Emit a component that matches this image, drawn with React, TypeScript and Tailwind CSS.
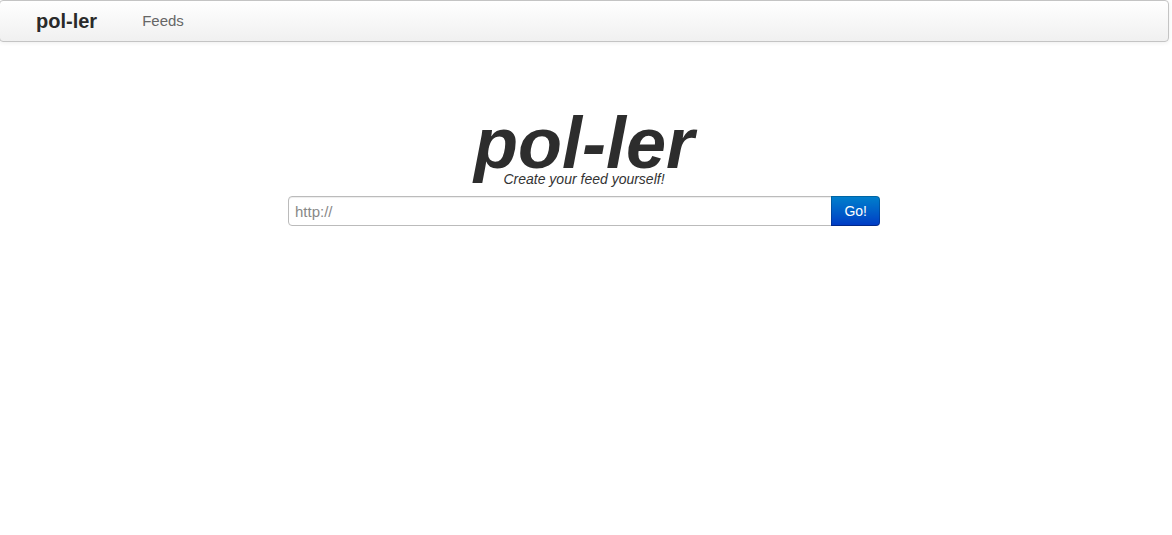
export default function App() {
  return (
    <div className="-ml-px pr-[3px] font-['Liberation_Sans',Arial,sans-serif] text-sm leading-5 text-[#333333]">
      <nav className="flex h-[42px] items-center rounded border border-[#c4c4c4] bg-linear-to-b from-white to-[#f0f0f0] pl-9 shadow-[0_1px_4px_rgba(0,0,0,0.067)]">
        <a href="#" className="text-xl leading-5 font-bold text-[#2a2a2a]">
          pol-ler
        </a>
        <a href="#feeds" className="ml-[45px] text-[15px] text-[#666666]">
          Feeds
        </a>
      </nav>
      <main className="mx-auto mt-[75px] max-w-[592px]">
        <header className="text-center italic">
          <h1 className="text-[72px] leading-[52px] font-bold text-[#2d2d2d]">pol-ler</h1>
          <p>Create your feed yourself!</p>
        </header>
        <form className="mt-[7px] flex" onSubmit={(event) => event.preventDefault()}>
          <input
            type="text"
            aria-label="Feed address"
            placeholder="http://"
            className="h-[30px] min-w-0 flex-1 rounded-l border border-[#bbbbbb] px-1.5 text-[15px] shadow-[inset_0_1px_1px_rgba(0,0,0,0.075)] placeholder:text-[#888888]"
          />
          <button
            type="submit"
            className="-ml-px h-[30px] rounded-r border border-black/20 border-b-black/30 bg-linear-to-b from-[#0080cc] to-[#0038c4] bg-origin-border px-3 text-white"
          >
            Go!
          </button>
        </form>
      </main>
    </div>
  );
}
